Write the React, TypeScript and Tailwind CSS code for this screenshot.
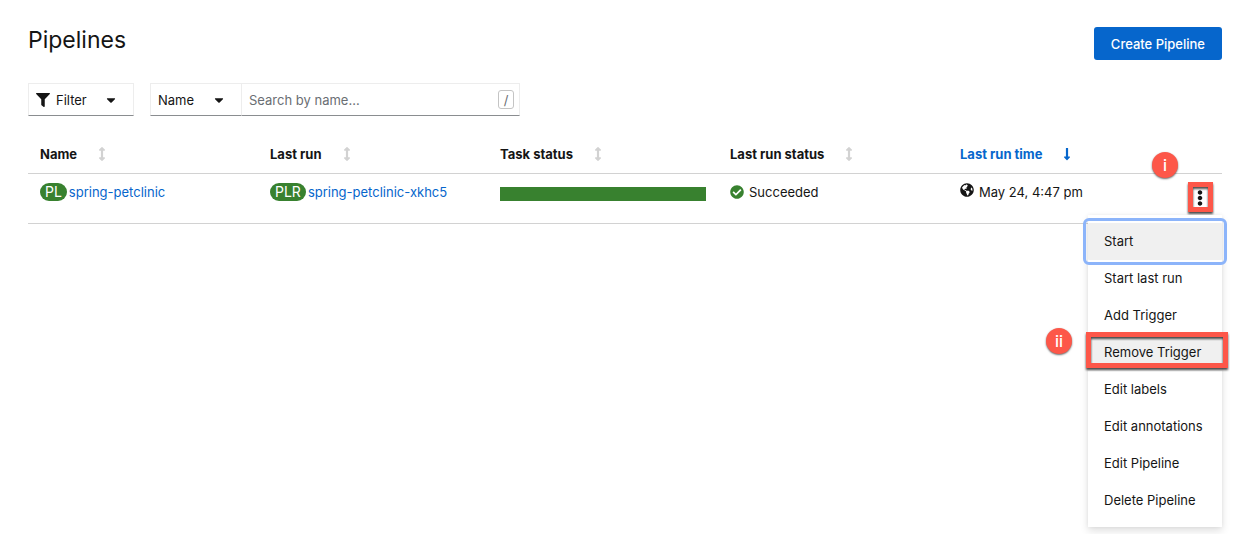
import React from "react";
import {
  FaArrowsAltV,
  FaCaretDown,
  FaCheckCircle,
  FaEllipsisV,
  FaFilter,
  FaGlobeAmericas,
  FaLongArrowAltDown,
} from "react-icons/fa";

const columns = ["Name", "Last run", "Task status", "Last run status"];

const actions = [
  "Start",
  "Start last run",
  "Add Trigger",
  "Remove Trigger",
  "Edit labels",
  "Edit annotations",
  "Edit Pipeline",
  "Delete Pipeline",
];

function Marker({ children }: { children: React.ReactNode }) {
  return (
    <span className="flex size-[26px] items-center justify-center rounded-full bg-[#fd5749] text-base font-medium text-white shadow-[0_1px_2px_rgba(0,0,0,0.6)]">
      {children}
    </span>
  );
}

function Badge({ children }: { children: React.ReactNode }) {
  return (
    <span className="inline-block rounded-full bg-[#38812f] px-[5px] text-sm leading-[18px] text-white">
      {children}
    </span>
  );
}

export default function App() {
  return (
    <main className="min-h-screen bg-white pr-[15px] pl-7 font-['Inter',sans-serif] text-[13px] leading-5 text-[#151515]">
      <header className="flex items-start justify-between pt-6">
        <h1 className="text-[23px] leading-8">Pipelines</h1>
        <button className="mt-[3px] h-[33px] rounded-[3px] bg-[#0666cc] px-[17px] font-medium text-white">
          Create Pipeline
        </button>
      </header>

      <div className="mt-[23px] flex h-[33px] gap-4">
        <button className="flex w-[106px] items-center border border-[#ededed] border-b-[#8a8d90] pl-[7px]">
          <FaFilter className="size-[14px]" />
          <span className="ml-[6px]">Filter</span>
          <FaCaretDown className="ml-[17px] size-[14px]" />
        </button>
        <div className="flex w-[370px]">
          <button className="flex w-[91px] shrink-0 items-center justify-between border border-r-0 border-[#ededed] border-b-[#8a8d90] pr-[15px] pl-[7px]">
            Name
            <FaCaretDown className="size-[14px]" />
          </button>
          <div className="flex min-w-0 flex-1 items-center border border-[#ededed] border-b-[#8a8d90] pr-[5px] pl-[7px]">
            <input
              type="text"
              aria-label="Search by name"
              placeholder="Search by name..."
              className="min-w-0 flex-1 bg-transparent outline-none placeholder:text-[#6a6e73]"
            />
            <kbd className="flex h-[19px] w-4 items-center justify-center rounded-[3px] border border-[#c4c4c4] font-['Inter',sans-serif] text-[#6a6e73]">
              /
            </kbd>
          </div>
        </div>
      </div>

      <table className="mt-[19px] w-full table-fixed border-collapse text-left">
        <thead>
          <tr className="h-[38px] border-b border-[#d2d2d2]">
            {columns.map((name) => (
              <th key={name} scope="col" className="px-3 font-bold">
                <button className="flex items-center gap-[18px]">
                  {name}
                  <FaArrowsAltV className="size-[14px] text-[#d2d2d2]" />
                </button>
              </th>
            ))}
            <th scope="col" className="px-3 font-bold text-[#0666cc]">
              <button className="flex items-center gap-[18px]">
                Last run time
                <FaLongArrowAltDown className="size-[14px]" />
              </button>
            </th>
            <th scope="col" aria-label="Actions" className="w-11">
              <span className="relative block">
                <span className="absolute -top-[2px] right-[44px]">
                  <Marker>i</Marker>
                </span>
              </span>
            </th>
          </tr>
        </thead>
        <tbody>
          <tr className="h-[50px] border-b border-[#d2d2d2] align-top">
            <td className="px-3 pt-2">
              <span className="flex items-center gap-[2px]">
                <Badge>PL</Badge>
                <a href="#pipeline" className="text-[#0666cc]">
                  spring-petclinic
                </a>
              </span>
            </td>
            <td className="px-3 pt-2 whitespace-nowrap">
              <span className="flex items-center gap-[2px]">
                <Badge>PLR</Badge>
                <a href="#run" className="text-[#0666cc]">
                  spring-petclinic-xkhc5
                </a>
              </span>
            </td>
            <td className="px-3 pt-[13px]">
              <div className="h-[14px] bg-[#38812f]" />
            </td>
            <td className="px-3 pt-2">
              <span className="flex items-center gap-[5px]">
                <FaCheckCircle className="size-[14px] text-[#38812f]" />
                Succeeded
              </span>
            </td>
            <td className="px-3 pt-2">
              <span className="flex gap-[5px]">
                <FaGlobeAmericas className="mt-[1px] size-[14px]" />
                May 24, 4:47 pm
              </span>
            </td>
            <td className="pt-2">
              <div className="relative flex justify-end pr-[9px]">
                <button aria-label="Actions" className="flex h-8 w-[26px] items-center justify-center">
                  <FaEllipsisV className="size-4" />
                </button>
                <span className="pointer-events-none absolute top-0 right-[9px] h-[30px] w-[25px] border-5 border-[#fd5749] drop-shadow-[0_2px_1px_rgba(0,0,0,0.7)]" />
                <ul className="absolute top-[33px] right-0 w-[134px] bg-white py-2 shadow-[0_4px_8px_rgba(3,3,3,0.12),0_0_4px_rgba(3,3,3,0.06)]">
                  {actions.map((action) => (
                    <li key={action} className="relative h-[37px]">
                      <button
                        className={
                          action === "Start"
                            ? "h-full w-full rounded-[1px] bg-[#f0f0f0] pl-4 text-left outline-3 outline-offset-2 outline-[#8cb4fa]"
                            : action === "Remove Trigger"
                              ? "h-full w-full bg-[#f0f0f0] pl-4 text-left whitespace-nowrap"
                              : "h-full w-full pl-4 text-left whitespace-nowrap"
                        }
                      >
                        {action}
                      </button>
                      {action === "Remove Trigger" && (
                        <>
                          <span className="pointer-events-none absolute -top-[2px] -right-[6px] -left-[2px] h-9 border-5 border-[#fd5749] drop-shadow-[0_2px_1px_rgba(0,0,0,0.7)]" />
                          <span className="absolute -top-[6px] -left-[42px]">
                            <Marker>ii</Marker>
                          </span>
                        </>
                      )}
                    </li>
                  ))}
                </ul>
              </div>
            </td>
          </tr>
        </tbody>
      </table>
    </main>
  );
}
